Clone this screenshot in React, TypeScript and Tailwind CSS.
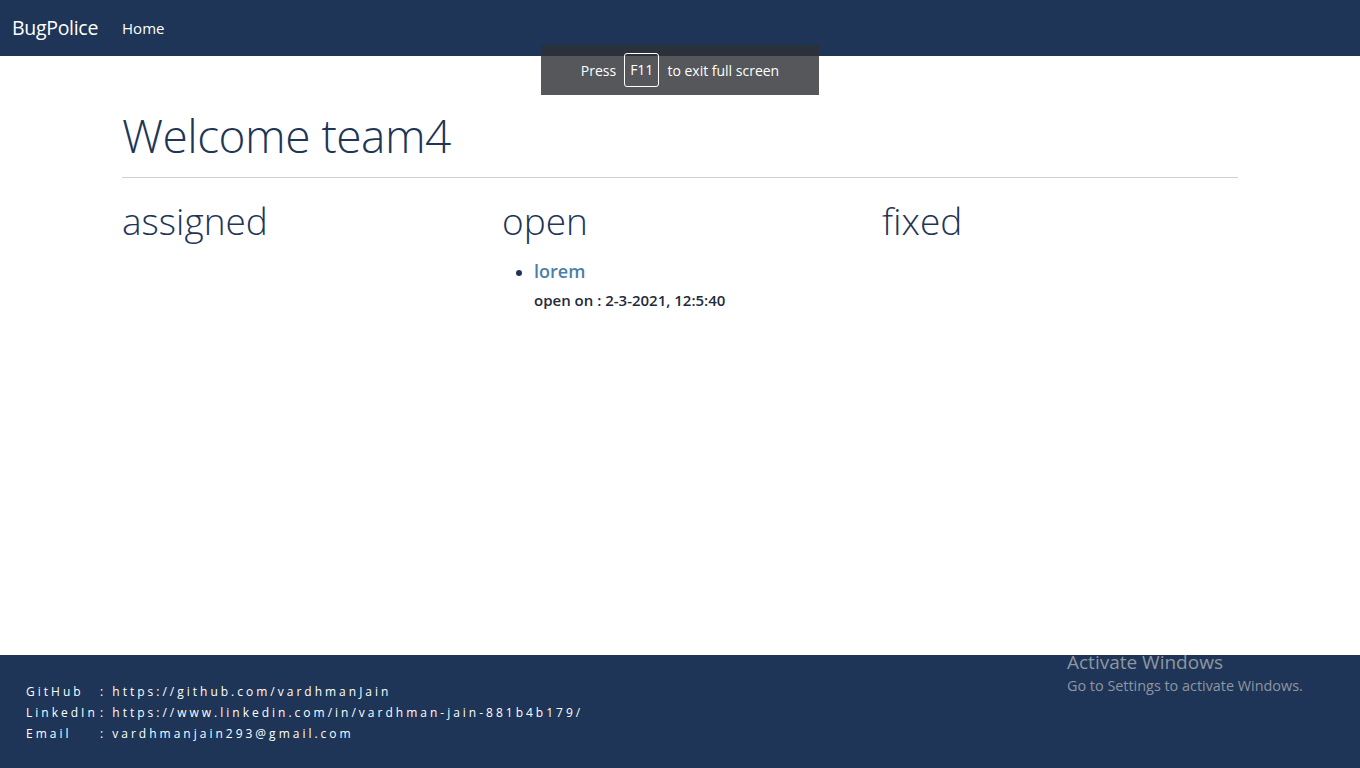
import React from "react";

const bugs = {
  assigned: [] as { title: string; date: string }[],
  open: [{ title: "lorem", date: "2-3-2021, 12:5:40" }],
  fixed: [] as { title: string; date: string }[],
};

const links = [
  { label: "GitHub", value: "https://github.com/vardhmanJain" },
  { label: "LinkedIn", value: "https://www.linkedin.com/in/vardhman-jain-881b4b179/" },
  { label: "Email", value: "vardhmanjain293@gmail.com" },
];

const App = () => {
  return (
    <div className="relative min-h-[768px] flex flex-col bg-white font-['Open_Sans',sans-serif]">
      {/* navbar */}
      <nav className="h-14 bg-[#1e3557] flex items-center pl-3">
        <span className="text-white text-[19.5px] tracking-[-0.3px]">BugPolice</span>
        <span className="text-white text-[15px] ml-6">Home</span>
      </nav>

      {/* main */}
      <main className="flex-1 w-[1116px] mx-auto pt-[47px]">
        <h1 className="text-[#1e3557] text-[46px] font-light leading-[64px] tracking-[-0.5px]">Welcome team4</h1>
        <hr className="mt-[10px] border-t border-[#cfcfd6]" />
        <div className="grid grid-cols-[380px_380px_1fr] mt-[19px]">
          {Object.entries(bugs).map(([name, list]) => (
            <div key={name}>
              <h2 className="text-[#1e3557] text-[37px] font-light leading-[48px]">{name}</h2>
              <ul className="list-disc pl-8 mt-[14px] text-[#1e3557]">
                {list.map((bug, i) => (
                  <li key={i}>
                    <div className="text-[#4a7fa8] text-[18px] font-semibold leading-[24px]">{bug.title}</div>
                    <div className="text-[#1e2b3c] text-[15px] font-semibold leading-[22px] mt-[6px]">open on : {bug.date}</div>
                  </li>
                ))}
              </ul>
            </div>
          ))}
        </div>
      </main>

      {/* footer */}
      <footer className="h-[113px] bg-[#1e3557] pl-[26px] pt-[26px]">
        {links.map((l) => (
          <div key={l.label} className="flex text-white text-[12px] tracking-[3px] leading-[21px]">
            <span className="w-[74px]">{l.label}</span>
            <span>: {l.value}</span>
          </div>
        ))}
      </footer>

      {/* fullscreen hint */}
      <div className="absolute left-[541px] top-[45px] w-[278px] h-[50px] bg-[rgba(46,48,52,0.81)] flex items-center justify-center gap-2 text-white text-[14px]">
        <span>Press</span>
        <span className="border border-white rounded-[3px] px-[5px] py-[9px] leading-[14px]">F11</span>
        <span>to exit full screen</span>
      </div>

      {/* windows watermark */}
      <div className="absolute left-[1067px] top-[650px] text-[#8f96a1]">
        <div className="text-[19px] leading-[24px]">Activate Windows</div>
        <div className="text-[14.4px] leading-[20px] mt-[2px]">Go to Settings to activate Windows.</div>
      </div>
    </div>
  );
};

export default App;
